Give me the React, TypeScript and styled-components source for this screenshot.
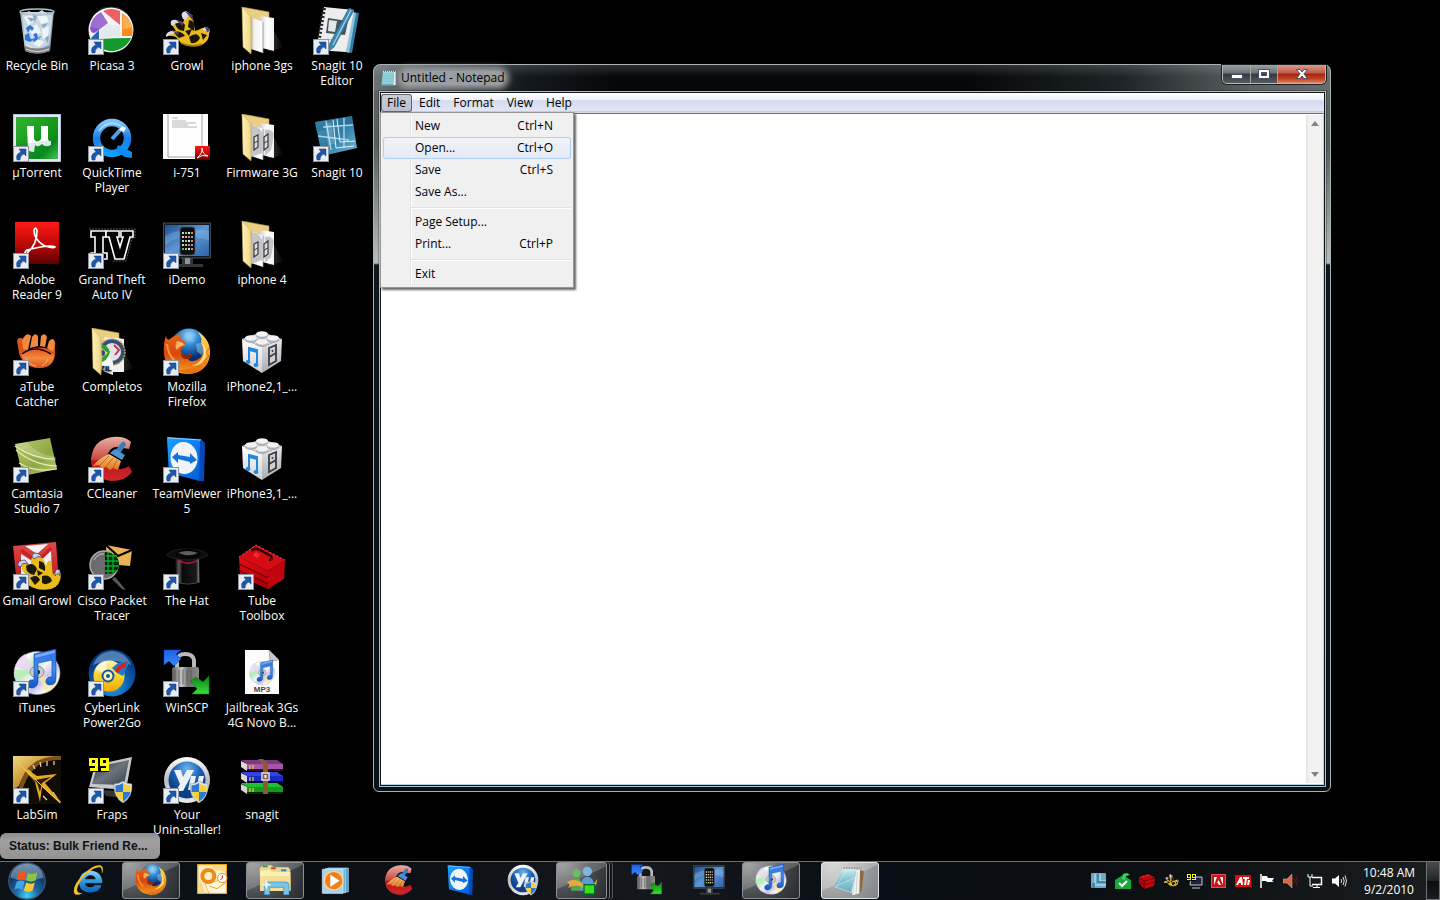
import React from "react";
import styled, { createGlobalStyle, css } from "styled-components";

const GlobalStyle = createGlobalStyle`
  *, *::before, *::after { box-sizing: border-box; }
  html, body { margin: 0; background: #000; }
  body, button, textarea { font-family: "Open Sans", "Noto Sans", sans-serif; font-size: 12px; }
  button { padding: 0; border: 0; background: none; color: inherit; cursor: default; }
`;

/* ---------- shared gradients ---------- */

const Defs = styled.svg`
  position: absolute;
  width: 0;
  height: 0;
`;

type Stop = [number, string];
const Lin = ({ id, s, h, d }: { id: string; s: Stop[]; h?: boolean; d?: boolean }) => (
  <linearGradient id={id} x1="0" y1="0" x2={h || d ? "1" : "0"} y2={h ? "0" : "1"}>
    {s.map(([o, c]) => <stop key={o} offset={o} stopColor={c} />)}
  </linearGradient>
);
const Rad = ({ id, s, cy = 0.4 }: { id: string; s: Stop[]; cy?: number }) => (
  <radialGradient id={id} cx="0.5" cy={cy} r="0.6">
    {s.map(([o, c]) => <stop key={o} offset={o} stopColor={c} />)}
  </radialGradient>
);

const SharedDefs = () => (
  <Defs aria-hidden="true">
    <defs>
      <Lin id="bin" h s={[[0, "#8fa3b5"], [0.25, "#dfe8f0"], [0.6, "#b9c9d8"], [1, "#74879a"]]} />
      <Lin id="fold" h s={[[0, "#fdf3b8"], [0.7, "#f3de93"], [1, "#d9bd68"]]} />
      <Lin id="paper" h s={[[0, "#cfcfcf"], [0.5, "#ffffff"], [1, "#f2f2f2"]]} />
      <Lin id="sheet" h s={[[0, "#b9b3a2"], [0.25, "#f1f1f1"], [1, "#ffffff"]]} />
      <Lin id="shadow" h s={[[0, "#555"], [1, "#000"]]} />
      <Lin id="green" d s={[[0, "#35b235"], [0.5, "#159b1c"], [0.75, "#0c8a14"], [1, "#4fd05a"]]} />
      <Lin id="qt" s={[[0, "#7cc4ff"], [0.5, "#1b7fe6"], [1, "#0aa0ff"]]} />
      <Lin id="snag" d s={[[0, "#4a97bd"], [0.5, "#2c7da6"], [1, "#7fb9d6"]]} />
      <Lin id="red" s={[[0, "#ff1a12"], [0.5, "#c00a08"], [1, "#5c0000"]]} />
      <Lin id="screen" d s={[[0, "#1f4f92"], [0.5, "#5e97d3"], [1, "#2a62aa"]]} />
      <Lin id="orange" s={[[0, "#e0501c"], [0.5, "#f58a3c"], [1, "#d8501c"]]} />
      <Lin id="fox" s={[[0, "#e8641a"], [0.5, "#d9480f"], [1, "#f6a21c"]]} />
      <Lin id="tail" s={[[0, "#ffe36a"], [0.5, "#f8a81e"], [1, "#e56a10"]]} />
      <Rad id="globe" cy={0.2} s={[[0, "#9fdcff"], [0.45, "#2e86d0"], [1, "#0b2c6e"]]} />
      <Lin id="cam" d s={[[0, "#b8cc6c"], [0.6, "#8fa843"], [1, "#b9cf77"]]} />
      <Lin id="cc" s={[[0, "#e9b0a4"], [0.5, "#cb4a40"], [0.55, "#b8181c"], [1, "#d2262a"]]} />
      <Lin id="brush" s={[[0, "#f8c27a"], [1, "#e0761c"]]} />
      <Lin id="tv" d s={[[0, "#1aa0ff"], [1, "#0060dc"]]} />
      <Lin id="cubeL" s={[[0, "#ffffff"], [1, "#cdd0d6"]]} />
      <Lin id="cubeR" s={[[0, "#e6e7ea"], [1, "#a9acb2"]]} />
      <Lin id="gmail" s={[[0, "#e04a48"], [1, "#b01418"]]} />
      <Lin id="box" s={[[0, "#e60c14"], [1, "#a40008"]]} />
      <Lin id="disc" d s={[[0, "#c7ccd3"], [0.2, "#ffffff"], [0.35, "#b7e8c4"], [0.5, "#f4f4f4"], [0.65, "#c9c2ec"], [0.8, "#ffffff"], [1, "#b6bec8"]]} />
      <Lin id="note" s={[[0, "#2f6be0"], [0.5, "#3f8ef2"], [1, "#0f55c8"]]} />
      <Rad id="p2g" cy={0.75} s={[[0, "#2fa8e8"], [0.55, "#0e63b4"], [1, "#083a80"]]} />
      <Lin id="yel" s={[[0, "#fff3b0"], [0.5, "#ffd42a"], [1, "#f5a800"]]} />
      <Lin id="lock" h s={[[0, "#5a5a5a"], [0.35, "#c2c2c2"], [0.6, "#6f6f6f"], [1, "#8c8c8c"]]} />
      <Lin id="arrG" s={[[0, "#0f7f14"], [1, "#35e03a"]]} />
      <Lin id="arrB" s={[[0, "#1a62e8"], [1, "#3b8bf8"]]} />
      <Lin id="gold" d s={[[0, "#f0d483"], [0.5, "#c8922c"], [1, "#8a5a14"]]} />
      <Lin id="mon" d s={[[0, "#2b2f36"], [0.5, "#6c747e"], [1, "#3b4047"]]} />
      <Rad id="yu" cy={0.2} s={[[0, "#6fb6ec"], [0.6, "#1c62b4"], [1, "#0e3f88"]]} />
      <Lin id="silver" s={[[0, "#ffffff"], [0.5, "#b9bcc2"], [1, "#e8eaee"]]} />
      <Rad id="orb" cy={0.9} s={[[0, "#3ed4f6"], [0.5, "#1b6aa8"], [1, "#123a66"]]} />
      <Lin id="shine" s={[[0, "#ffffff"], [1, "#8fb4d0"]]} />
      <Lin id="hatb" h s={[[0, "#000"], [0.15, "#5a5a5a"], [0.3, "#0a0a0a"], [0.85, "#1a1a1a"], [0.95, "#777"], [1, "#000"]]} />
      <Lin id="ie" s={[[0, "#8fd8ff"], [0.5, "#2f94dc"], [1, "#0b62b8"]]} />
      <Lin id="pad" s={[[0, "#cfeef4"], [0.5, "#7cc2d0"], [1, "#4f9fb4"]]} />
    </defs>
  </Defs>
);

/* ---------- icon drawings, 48 × 48 ---------- */

const RecycleBin = () => (
  <g>
    <path d="M7 5 L41 5 L37 44 Q24 49 12 44 Z" fill="url(#bin)" />
    <path d="M9 8 L16 4 22 7 29 3 34 7 40 5 38 24 36 38 25 41 13 38 Z" fill="#c9d8e6" />
    <path d="M11 10 L18 7 22 14 15 18 Z M24 9 L33 7 36 15 28 17 Z M16 22 L24 17 28 26 20 29 Z M29 22 L36 19 35 30 30 32 Z M25 32 L31 35 26 40 20 37 Z" fill="#eef4f9" />
    <path d="M14 10 L22 12 18 15 Z M28 18 L35 16 31 21 Z M22 30 L29 29 26 33 Z M32 31 L36 28 35 37 Z M20 6 L24 10 21 16 Z" fill="#8ea6be" />
    <ellipse cx="24" cy="5" rx="17" ry="3" fill="none" stroke="#b2bdc7" strokeWidth="1.4" />
    <path d="M13 21 L17 18 21 21 19 24 17 22 15 26 Z M12 28 L16 26 17 31 20 33 17 35 12 33 Z M20 27 L24 26 25 32 21 35 19 32 22 31 Z" fill="#2f74d8" />
    <path d="M12 39 Q24 44 37 39 L37 44 Q24 49 12 44 Z" fill="#7d7e7f" />
    <path d="M13 42 Q24 47 36 42" stroke="#dedede" fill="none" />
  </g>
);

const Picasa = () => (
  <g>
    <circle cx="23" cy="23" r="22.5" fill="#f4f4f4" />
    <path d="M2 21 A21 21 0 0 1 13 5 L20 16 8 25 Q3 28 2 21 Z" fill="#8b55c8" />
    <path d="M15 4 A21 21 0 0 1 32 4 L32 18 Z" fill="#e8434a" />
    <path d="M34 6 A21 21 0 0 1 44 29 L34 29 Z" fill="#f98a1c" />
    <path d="M35 8 A21 21 0 0 1 44 21 L35 23 Z" fill="#fbb040" opacity="0.6" />
    <path d="M43 31 A21 21 0 0 1 8 37 L11 32 Q26 31 43 31 Z" fill="#139a2c" />
    <path d="M3 31 L11 23 11 33 7 36 Z" fill="#2765b4" />
    <path d="M12 24 L20 17 32 19 32 30 12 31 Z" fill="#e3e8ec" />
    <path d="M2 20 A21 21 0 0 1 44 20 Q24 26 2 20 Z" fill="#fff" opacity="0.15" />
  </g>
);

const Paw = () => (
  <g>
    <path d="M13 30 Q8 28 3 29 Q5 23 13 24 Q10 20 8 15 Q12 11 17 17 Q20 18 21 13 Q19 7 23 6 Q29 7 31 17 L32 24 Q36 23 39 21 Q43 20 46 26 Q47 33 39 38 Q29 42 18 36 Z" fill="#e9bb1d" />
    <path d="M12 16 Q18 12 22 18 L21 24 Q13 23 12 16 Z M26 13 Q33 13 31 24 L25 20 Z M10 25 Q18 23 22 29 L16 31 Z M26 30 Q34 24 37 31 Q34 37 28 36 Z M22 24 L29 22 26 29 Z M38 26 L44 28 40 33 Z" fill="#1c1608" />
    <path d="M20 12 Q16 5 23 4 L30 9 Q24 8 23 13 Z M8 18 Q6 12 14 13 L20 16 Q12 15 10 19 Z M3 30 Q2 24 12 24 L16 26 Q8 26 5 29 Z M40 22 Q43 17 47 23 L46 27 Q44 22 40 24 Z" fill="#dcd9ea" />
    <path d="M22 4 L29 8 31 15 26 9 Z M13 13 L20 15 20 19 15 15 Z M9 24 L16 25 15 28 Z M42 20 Q45 19 47 24 L44 25 Z" fill="#49406e" />
    <path d="M18 36 Q28 41 39 37" stroke="#a87908" fill="none" strokeWidth="1.5" />
  </g>
);

const Folder = ({ kind }: { kind?: "cubes" | "brazil" }) => (
  <g>
    <path d="M30 44 L46 41 36 24 Z" fill="url(#shadow)" opacity="0.7" />
    <path d="M4 0 L31 5 31 30 12 36 Z" fill="#e9cf80" stroke="#b3934c" strokeWidth="0.6" />
    <path d="M22 9 L36 11 36 44 24 41 Z" fill="url(#paper)" />
    {kind === "brazil" && (
      <g>
        <path d="M16 9 L36 12 36 44 22 44 Z" fill="#f1f1f1" />
        <circle cx="24" cy="24" r="11" fill="#e3e3e6" stroke="#33507c" strokeWidth="4" />
        <circle cx="24" cy="24" r="13" fill="none" stroke="#bd9f4a" strokeWidth="1.500" strokeDasharray="2 1" />
        <path d="M26 17 L31 22 27 27" stroke="#c03a4c" fill="none" strokeWidth="2" />
      </g>
    )}
    {kind !== "brazil" && <path d="M13 10 L25 15 25 46 13 42 Z" fill="url(#sheet)" />}
    {kind !== "brazil" && <path d="M25 15 V46" stroke="#8e8e8e" strokeWidth="0.800" />}
    {kind === "cubes" && (
      <g>
        <path d="M14 12 Q20 10 25 20 L24 39 13 43 Z M27 16 Q33 14 36 20 L33 36 27 42 Z" fill="#c4c4ca" />
        <path d="M16 23 L20 21 20 33 16 36 Z M26 23 L30 20 30 33 26 36 Z" fill="#dedede" stroke="#3a3a3a" strokeWidth="1.200" />
        <path d="M16 29 L20 27 M26 29 L30 27" stroke="#3a3a3a" />
      </g>
    )}
    {kind === "brazil" && (
      <g>
        <path d="M12 17 L25 34 25 47 12 42 Z" fill="#f7f7f7" />
        <path d="M12 17 Q19 15 22 24 Q19 34 12 34 Z" fill="#2e9d3a" />
        <path d="M12 19 L20 25 12 31 Z" fill="#f3d93a" />
        <circle cx="14" cy="25" r="3" fill="#23429a" />
        <text x="12" y="43" fontFamily="Liberation Sans" fontWeight="700" fontSize="8" fill="#111">ZIL</text>
      </g>
    )}
    <path d="M4 0 L13 10 14 30 13 47 5 40 Z" fill="url(#fold)" stroke="#caa95a" strokeWidth="0.5" />
  </g>
);

const SnagitEditor = () => (
  <g>
    <path d="M34 4 L46 6 39 46 28 44 Z" fill="#2f7fa5" />
    <path d="M39 5 L43 6 36 46 33 45 Z" fill="#8cc3dc" />
    <path d="M11 0 L41 3 33 45 3 43 Z" fill="#ededed" />
    <path d="M11 1 L4 43" stroke="#222" strokeWidth="4" strokeDasharray="2 2" />
    <path d="M15 11 L35 14 32 28 13 26 Z" fill="#44575a" />
    <path d="M16 13 L24 14 22 25 15 24 Z" fill="#e2e8e8" />
    <path d="M27 16 L32 17 30 25 26 24 Z" fill="#5c8f9e" />
    <path d="M14 32 L20 33 M13 36 L17 37" stroke="#bbb" />
    <path d="M36 1 L41 3 21 40 15 45 17 36 Z" fill="#3f88b2" stroke="#1e5678" strokeWidth="0.6" />
    <path d="M38 3 L20 38" stroke="#a9d4ea" strokeWidth="1.2" />
  </g>
);

const UTorrent = () => (
  <g>
    <rect width="48" height="48" fill="#dfe9f2" stroke="#8fa6bd" />
    <rect x="3" y="3" width="42" height="42" fill="url(#green)" />
    <path d="M14 12 L21 12 21 25 Q24 30 28 25 L28 12 35 12 35 25 Q36 28 38 27 L38 31 Q32 34 29 30 Q25 34 22 31 L21 38 Q17 38 15 36 Z" fill="#fff" />
    <path d="M3 26 Q20 34 45 22 L45 45 3 45 Z" fill="#075" opacity="0.15" />
  </g>
);

const QuickTime = () => (
  <g>
    <circle cx="24" cy="24" r="15.5" fill="none" stroke="url(#qt)" strokeWidth="7.5" />
    <path d="M30 31 L44 38 44 44 37 43 28 37 Z" fill="#0f8af0" />
    <path d="M11 17 A15.500 15.500 0 0 1 33 12" stroke="#d6edff" fill="none" strokeWidth="1.5" opacity="0.7" />
    <path d="M24 25 L33 15" stroke="#4f9fe8" strokeWidth="4" />
    <path d="M31 16 L34 12 38 14 36 18 Z" fill="#fff" />
  </g>
);

const PdfDoc = () => (
  <g>
    <rect width="45" height="45" fill="#fff" />
    <path d="M5 0 V43 H39 V0" fill="#fefefe" stroke="#8c8c8c" strokeWidth="0.8" />
    <path d="M9 4 H15 M9 7 H23 M9 9 H33 M9 11 H25 M9 13 H34" stroke="#999" strokeWidth="0.7" />
    <rect x="32" y="32" width="15" height="14" fill="url(#red)" />
    <path d="M34 44 Q40 39 39 34 Q39 40 45 42 Q39 40 34 44 Z" stroke="#fff" fill="none" />
  </g>
);

const Snagit = () => (
  <g>
    <path d="M2 8 L39 2 44 34 9 42 Z" fill="url(#snag)" />
    <path d="M2 8 L39 2 40 10 3 18 Z" fill="#1c5a80" opacity="0.35" />
    <path d="M13 7 L18 36 M5 22 L36 26 M31 4 L31 34 M10 13 L40 11" stroke="#a9d3e6" fill="none" strokeWidth="1.4" />
    <path d="M20 6 L23 34 41 32 M24 5 L27 28 42 27" stroke="#e6f4fa" fill="none" />
    <path d="M12 10 L18 8 22 30 15 31 Z" fill="#fff" opacity="0.2" />
  </g>
);

const Adobe = () => (
  <g>
    <rect x="2" y="1" width="44" height="42" fill="url(#red)" />
    <path d="M14 32 Q24 24 24 10 Q23 5 21 9 Q21 18 30 24 Q40 28 42 26 Q38 23 14 29 Q10 32 14 33" stroke="#fff" fill="none" strokeWidth="1.7" />
  </g>
);

const GtaIV = () => (
  <g>
    <path d="M3 10 H18 V16 H15 V32 H19 V38 H3 V32 H7 V16 H3 Z" fill="#000" stroke="#fff" strokeWidth="1.6" />
    <path d="M18 10 H31 V16 H29 L32 26 35 16 H33 V10 H45 V16 H42 L36 38 H27 L21 16 H18 Z" fill="#000" stroke="#fff" strokeWidth="1.6" />
    <path d="M1 8 H47 V17 H44 L38 40 H25" stroke="#999" fill="none" strokeWidth="0.6" strokeDasharray="2 1" />
  </g>
);

const IDemo = () => (
  <g>
    <path d="M19 36 H30 V43 H40 V46 H10 V43 H19 Z" fill="#33373c" />
    <path d="M22 36 H27 V43 H22 Z" fill="#8e949b" />
    <rect x="0.500" y="2" width="47" height="35" fill="#141a24" stroke="#5c6672" strokeWidth="0.7" />
    <rect x="2" y="4" width="44" height="31" fill="url(#screen)" />
    <path d="M2 24 Q20 10 46 20 L46 10 Q20 5 2 15 Z" fill="#9cc6ef" opacity="0.3" />
    <rect x="17" y="6" width="15" height="28" rx="3" fill="#0c0d0f" stroke="#4e5560" strokeWidth="0.8" />
    {[0, 1, 2, 3, 4].map((r) => (
      <g key={r}>
        <rect x="19" y={11 + r * 4} width="2" height="2" fill={r === 4 ? "#4dc84f" : "#b9d7d0"} />
        <rect x="22" y={11 + r * 4} width="2" height="2" fill={r % 2 ? "#e4c24c" : "#8fd05c"} />
        <rect x="25" y={11 + r * 4} width="2" height="2" fill={r % 2 ? "#e07ab0" : "#e8e8e8"} />
        <rect x="28" y={11 + r * 4} width="2" height="2" fill={r % 2 ? "#6aa5e8" : "#e58a50"} />
      </g>
    ))}
  </g>
);

const ATube = () => (
  <g>
    <path d="M4 13 Q5 9 9 10 L15 23 Q24 17 36 21 L40 14 Q43 12 42 20 Q44 40 25 40 Q10 39 6 25 Z" fill="#d9531c" />
    <path d="M9 12 Q14 3 18 8 L15 22 10 21 Z M19 9 Q22 4 25 8 L25 18 17 20 Z M28 8 Q32 4 34 9 L32 19 27 18 Z M36 13 Q41 8 42 15 L40 24 34 20 Z" fill="#f08a3e" />
    <path d="M8 26 Q12 22 24 20 Q36 21 41 27 Q41 40 25 40 Q12 39 8 26 Z" fill="url(#orange)" />
    <path d="M9 26 Q22 16 38 26" stroke="#200" fill="none" strokeWidth="1.5" />
    <path d="M13 30 Q16 37 23 38 M35 31 Q33 36 29 38" stroke="#f9b27a" fill="none" />
  </g>
);

const Firefox = () => (
  <g>
    <circle cx="26" cy="19" r="18.500" fill="url(#globe)" />
    <path d="M22 5 Q30 3 33 7 L29 10 31 14 25 13 21 9 Z M33 16 L40 14 42 22 38 27 34 23 Z" fill="#8cc4e8" opacity="0.55" />
    <path d="M3 8 Q4 13 7 11 Q11 7 18 6 L17 10 Q22 13 23 17 Q17 19 18 24 Q21 29 28 26 Q30 28 25 31 Q28 36 37 30 Q44 24 41 12 Q48 22 46 31 Q41 46 24 46 Q4 45 1 27 Q0 15 3 8 Z" fill="url(#fox)" />
    <path d="M35 4 Q48 12 47 26 Q46 40 32 45 Q24 47 14 42 Q30 42 36 34 Q43 25 38 13 Q40 12 35 4 Z" fill="url(#tail)" />
    <path d="M38 14 Q43 22 40 29 Q36 36 28 38 Q39 38 43 29 Q45 20 38 14 Z" fill="#fff2a0" opacity="0.8" />
    <path d="M46 20 L43 25 46 28 41 33 43 36 M39 40 L36 38 32 43" stroke="#e0700f" fill="none" />
    <path d="M14 13 Q20 14 22 17 Q16 18 14 22 Q11 18 14 13 Z" fill="#f7b45a" />
    <path d="M18 25 Q22 29 29 26 Q29 30 24 31 Q18 31 18 25 Z" fill="#8a2508" />
    <path d="M4 16 Q5 27 12 33" stroke="#f99a3e" strokeWidth="2" fill="none" />
  </g>
);

const Cube = () => (
  <g>
    <path d="M4 11 L24 19 24 45 5 33 Z" fill="url(#cubeL)" />
    <path d="M24 19 L44 11 43 33 24 45 Z" fill="url(#cubeR)" />
    <path d="M4 11 L24 4 44 11 24 19 Z" fill="#d9dadd" />
    {[[24, 6], [13, 10], [35, 10], [24, 14]].map(([x, y]) => (
      <g key={`${x}-${y}`}>
        <path d={`M${x - 6} ${y} V${y + 2} A6 3 0 0 0 ${x + 6} ${y + 2} V${y} Z`} fill="#aeb0b6" />
        <ellipse cx={x} cy={y} rx="6" ry="2.800" fill="#f3f3f5" />
      </g>
    ))}
    <path d="M11 34 V20 L19 22 V37" stroke="#2387dc" strokeWidth="2" fill="none" />
    <path d="M11 20 L19 22 V25 L11 23 Z" fill="#2387dc" />
    <ellipse cx="10" cy="34" rx="2.500" ry="2" fill="#2387dc" />
    <ellipse cx="18" cy="37" rx="2.500" ry="2" fill="#2387dc" />
    <path d="M31 20 L38 17 38 33 31 37 Z" fill="#cfd0d4" stroke="#3b3b3f" strokeWidth="1.8" />
    <path d="M31 29 L38 25" stroke="#3b3b3f" strokeWidth="1.800" />
    <circle cx="34.500" cy="23" r="1" fill="#3b3b3f" />
  </g>
);

const Camtasia = () => (
  <g>
    <path d="M2 9 L37 3 44 34 10 41 Z" fill="url(#cam)" />
    <path d="M3 15 Q20 30 44 31 M2 11 Q20 24 42 24 M6 28 Q22 38 44 34" stroke="#e4ecba" fill="none" strokeWidth="1.200" />
    <path d="M2 9 Q20 26 43 26 L43 22 Q24 20 14 7 Z" fill="#fff" opacity="0.2" />
  </g>
);

const CCleaner = () => (
  <g>
    <path d="M43 7 Q37 1 25 2 Q5 4 3 24 Q3 44 24 46 Q37 46 44 37 L41 31 Q34 36 27 33 Q18 29 19 21 Q22 11 30 12 L41 14 Z" fill="url(#cc)" />
    <path d="M34 7 Q37 5 38 10 L31 20 26 17 Z" fill="#3a7cc0" />
    <path d="M22 18 L34 25 37 20 27 14 Z" fill="#4b93d6" />
    <path d="M21 19 L33 26 30 35 25 33 22 35 18 32 14 33 11 30 5 31 Q10 24 21 19 Z" fill="url(#brush)" />
    <path d="M21 21 L12 30 M25 23 L18 32 M29 25 L25 33" stroke="#b3591a" strokeWidth="0.800" />
  </g>
);

const TeamViewer = () => (
  <g>
    <path d="M4 2 L38 4 42 8 41 46 36 46 6 38 Z" fill="#0449b8" />
    <path d="M4 2 L37 5 36 45 6 38 Z" fill="url(#tv)" />
    <ellipse cx="21" cy="23" rx="13.500" ry="16" fill="#f0f3f8" transform="rotate(-6 21 23)" />
    <path d="M9 22 L15 17 15 20 27 22 27 18 34 25 27 29 27 27 15 24 15 28 Z" fill="#1173de" />
    <path d="M5 3 L38 5" stroke="#8fd0ff" />
  </g>
);

const GmailGrowl = () => (
  <g>
    <path d="M0 4 L43 0 46 40 4 44 Z" fill="url(#gmail)" />
    <path d="M12 4 L35 2 24 12 Z" fill="#f3f5fa" />
    <path d="M8 12 L24 22 38 9 39 36 8 38 Z" fill="#eef0f8" />
    <path d="M8 8 L24 20 38 6" stroke="#c92024" strokeWidth="3" fill="none" />
    <path d="M12 32 Q8 28 9 21 Q14 18 18 25 Q17 12 24 12 Q31 14 33 24 Q35 16 38 20 L40 33 Q45 26 48 32 Q48 44 38 47 Q24 50 14 42 Q8 40 7 35 Z" fill="#e9bb1d" />
    <path d="M13 24 Q20 19 24 27 L21 33 Q13 32 13 24 Z M26 19 Q33 19 32 29 L26 26 Z M29 34 Q37 32 39 39 Q34 44 29 41 Z M17 36 Q24 31 27 38 L22 43 Z M24 28 L30 31 25 34 Z" fill="#1c1608" />
    <path d="M5 24 Q4 18 12 18 L15 22 Q8 20 8 25 Z M19 15 Q19 9 26 12 L30 16 Q24 13 22 17 Z M42 31 Q42 26 47 28 L47 34 Q46 29 42 34 Z" fill="#cfcbe6" stroke="#49406e" strokeWidth="0.800" />
  </g>
);

const PacketTracer = () => (
  <g>
    <path d="M18 3 L44 8 42 24 19 22 Z" fill="#e9b457" />
    <path d="M18 3 L30 14 44 8" stroke="#000" fill="none" strokeWidth="2" />
    <circle cx="16" cy="23" r="14" fill="#6c6c6c" stroke="#a8a8a8" strokeWidth="1.500" />
    <path d="M17 10 Q31 11 31 23 Q30 33 17 32 Z" fill="#021" />
    <path d="M18 14 H29 M17 19 H31 M17 24 H31 M17 29 H29 M20 10 V32 M25 12 V31" stroke="#00b81e" strokeWidth="1.300" />
    <path d="M27 35 L38 48 34 47 24 37 Z" fill="#55585c" />
    <path d="M6 18 Q10 11 16 12" stroke="#c9c9c9" fill="none" />
  </g>
);

const Hat = () => (
  <g>
    <path d="M12 17 H36 L37 40 Q25 45 13 40 Z" fill="url(#hatb)" />
    <path d="M15 17 Q25 24 35 17 L35 19 Q25 25 15 19 Z" fill="#b31a3c" />
    <path d="M3 13 Q8 7 24 7 Q41 7 45 13 Q38 18 24 18 Q9 18 3 13 Z" fill="#0e0e0e" stroke="#2c2c2c" strokeWidth="0.600" />
    <ellipse cx="25" cy="12" rx="13" ry="5" fill="#060606" />
    <path d="M15 11 Q24 7 35 11 Q29 14 22 13 Z" fill="#5d5f62" />
    <path d="M13 40 Q25 44 37 40" stroke="#444" fill="none" />
  </g>
);

const Toolbox = () => (
  <g>
    <path d="M1 15 L18 3 47 18 30 29 Z" fill="#d50c14" />
    <path d="M1 15 L30 29 30 47 2 35 Z" fill="url(#box)" />
    <path d="M30 29 L47 18 46 37 30 47 Z" fill="#c00410" />
    <path d="M1 22 L30 36 M2 29 L30 42" stroke="#6e0006" strokeWidth="1.200" />
    <path d="M14 9 Q16 5 22 8 L33 14 Q35 18 31 18" stroke="#2a0606" strokeWidth="2.500" fill="none" />
    <path d="M1 15 L18 3 47 18" stroke="#ff4a50" fill="none" strokeDasharray="2 2" />
    <path d="M15 13 L18 10 22 13 19 16 Z" fill="#ff2a30" />
  </g>
);

const ITunes = () => (
  <g>
    <ellipse cx="24" cy="24" rx="23" ry="21.500" fill="url(#disc)" stroke="#9aa3ae" strokeWidth="0.600" />
    <path d="M24 24 L2 18 Q5 8 12 5 Z" fill="#e9d6f0" opacity="0.8" />
    <path d="M24 24 L1 28 2 20 Z" fill="#b5efb0" opacity="0.8" />
    <path d="M24 24 L45 33 Q41 41 33 44 Z" fill="#f8e8a0" opacity="0.7" />
    <ellipse cx="24" cy="23" rx="7" ry="6" fill="#c9ccd2" stroke="#8b9097" />
    <ellipse cx="24" cy="23" rx="3" ry="2.500" fill="#222" />
    <path d="M21 5 L43 0 43 30 Q43 36 36 36 Q32 35 33 31 Q35 27 39 28 L39 11 25 14 25 33 Q24 39 18 39 Q13 38 15 33 Q17 30 21 31 Z" fill="url(#note)" stroke="#0d3f9c" strokeWidth="0.600" />
    <path d="M22 6 L42 1 42 4 22 9 Z" fill="#8fc0ff" opacity="0.700" />
  </g>
);

const Power2Go = () => (
  <g>
    <circle cx="24" cy="24" r="23.500" fill="url(#p2g)" />
    <path d="M5 16 Q10 3 24 2 Q38 3 43 16 Q24 8 5 16 Z" fill="#b8e4fa" opacity="0.4" />
    <circle cx="21" cy="27" r="15.500" fill="url(#yel)" />
    <path d="M21 27 L7 20 Q11 13 17 12 Z" fill="#fff" opacity="0.6" />
    <path d="M24 19 L30 14 42 12 35 27 29 24 Z" fill="#1f7cc4" />
    <circle cx="20" cy="27" r="5.500" fill="#fff0a8" stroke="#0f5aa8" strokeWidth="2" />
    <circle cx="20" cy="27" r="2" fill="#0f5aa8" />
    <path d="M27 22 Q29 15 40 13 Q36 16 39 19 Q33 18 30 24 Z" fill="#e0201c" />
  </g>
);

const WinSCP = () => (
  <g>
    <path d="M14 19 V11 Q15 5 22 5 Q30 5 31 11 V19" fill="none" stroke="#b8babd" strokeWidth="4" />
    <rect x="9" y="18" width="27" height="20" rx="2" fill="url(#lock)" />
    <path d="M12 21 V35 M16 21 V35 M20 21 V35 M24 21 V35 M28 21 V35" stroke="#555" strokeWidth="0.800" />
    <path d="M1 1 H18 L13 5 18 10 11 17 6 12 1 16 Z" fill="url(#arrB)" stroke="#0c48b8" strokeWidth="0.600" />
    <path d="M28 32 L33 28 40 33 46 27 V45 H29 L34 40 Z" fill="url(#arrG)" stroke="#0a7a12" strokeWidth="0.600" />
  </g>
);

const Mp3 = () => (
  <g>
    <path d="M7 1 H31 L41 11 V45 H7 Z" fill="#fdfdfd" />
    <path d="M31 1 L41 11 32 12 Z" fill="#c9c9c9" stroke="#777" strokeWidth="0.500" />
    <g transform="translate(11 11) scale(0.550)"><ITunes /></g>
    <text x="24" y="43" textAnchor="middle" fontFamily="Liberation Sans" fontWeight="700" fontSize="8" fill="#444" style={{ textShadow: "none" }}>MP3</text>
  </g>
);

const LabSim = () => (
  <g>
    <rect width="48" height="48" fill="#120c06" />
    <path d="M0 0 H48 V4 Q16 0 6 30 L0 34 Z" fill="url(#gold)" />
    <path d="M48 4 Q20 2 10 32 L6 32 Q12 0 48 0 Z" fill="#7c521a" />
    <path d="M20 9 L22 13 M27 6 L28 11 M34 5 L34 10 M41 5 L41 9 M15 14 L19 17 M30 40 L34 44 M40 36 L44 42" stroke="#eadcc0" strokeWidth="1.200" />
    <path d="M5 7 L24 20 44 18 32 27 48 46 47 47 29 31 27 46 22 26 Z" fill="#e5a928" />
    <path d="M16 19 L22 24 38 21 29 27 27 36 24 27 Z" fill="#2c1c08" />
    <path d="M5 7 L47 47" stroke="#f5cf5e" />
  </g>
);

const Shield = ({ x, y }: { x: number; y: number }) => (
  <g transform={`translate(${x} ${y})`}>
    <path d="M9 0 Q13 3 18 3 Q19 16 9 22 Q-1 16 0 3 Q5 3 9 0 Z" fill="#dfe5ee" stroke="#77808c" strokeWidth="0.500" />
    <path d="M9 2 V11 H1.500 V4.500 Q6 4 9 2 Z M9 11 H16.500 Q15 17 9 20.500 Z" fill="#2f78d0" />
    <path d="M9 2 Q12 4.500 16.500 4.500 V11 H9 Z M1.500 11 H9 V20.500 Q3 17 1.500 11 Z" fill="#f6cf3c" />
  </g>
);

const Fraps = () => (
  <g>
    <path d="M7 9 L44 1 38 34 1 31 Z" fill="#c7cacd" />
    <path d="M9 11 L41 4 36 29 4 28 Z" fill="url(#mon)" />
    <path d="M14 34 L30 35 28 41 18 40 Z" fill="#34373a" />
    <rect x="0" y="1" width="21" height="15" fill="#000" />
    <path d="M1 2 H10 V15 H2 V12 H7 V10 H1 Z M4 4 V7 H7 V4 Z M12 2 H21 V15 H13 V12 H18 V10 H12 Z M15 4 V7 H18 V4 Z" fill="#ff0" fillRule="evenodd" />
    <Shield x={26} y={25} />
  </g>
);

const YourUninstaller = () => (
  <g>
    <circle cx="24" cy="24" r="23" fill="url(#silver)" />
    <circle cx="24" cy="24" r="18.500" fill="url(#yu)" />
    <path d="M11 14 H18 L20 21 24 14 H31 L20 35 H13 L17 28 Z M28 20 H33 L31 29 H34 L36 20 H41 L38 34 H25 Z" fill="#eef2f6" />
    <Shield x={27} y={25} />
  </g>
);

const WinRar = () => (
  <g>
    {[
      { y: 4, a: "#a856a4", b: "#7c3a7e" },
      { y: 16, a: "#1c28c8", b: "#3444dc" },
      { y: 27, a: "#149a20", b: "#22c030" },
    ].map(({ y, a, b }) => (
      <g key={y}>
        <path d={`M3 ${y} L39 ${y} 45 ${y + 4} 9 ${y + 4} Z`} fill={b} />
        <path d={`M9 ${y + 4} H45 V${y + 11} H9 Z`} fill={a} />
        <path d={`M9 ${y + 10} H45`} stroke="#000" strokeWidth="1.500" />
        <path d={`M3 ${y + 1} L9 ${y + 4} V${y + 11} L3 ${y + 7} Z`} fill="#d8d8d8" />
        <path d={`M12 ${y + 5} V${y + 9} M15 ${y + 5} V${y + 9}`} stroke="#e8d34a" strokeWidth="1.200" />
      </g>
    ))}
    <path d="M20 3 H25 L30 8 V38 H25 V8 Z" fill="#8a5a34" />
    <rect x="24" y="17" width="7" height="7" fill="none" stroke="#d8d8d0" strokeWidth="1.600" />
    <rect x="26.500" y="19" width="2" height="3" fill="#fff" />
  </g>
);

const ShortcutArrow = () => (
  <g>
    <rect x="0.500" y="32.500" width="15" height="15" fill="#e8edf3" stroke="#8d959e" />
    <path d="M4 46 Q2 40 8 38 L6 35 H13 V42 L11 40 Q7 41 7 46 Z" fill="#1f57a8" stroke="#123c80" strokeWidth="0.500" />
  </g>
);

/* taskbar-only drawings, same 48 grid */

const StartOrb = () => (
  <g>
    <circle cx="24" cy="24" r="23" fill="url(#orb)" stroke="#3b5a78" strokeWidth="1.500" />
    <path d="M3 20 Q6 3 24 2 Q42 3 45 20 Q24 27 3 20 Z" fill="url(#shine)" opacity="0.45" />
    <path d="M13 14 Q18 10 23 13 L21 23 Q16 20 11 23 Z" fill="#f2561d" />
    <path d="M25 14 Q31 17 37 13 L35 23 Q29 26 23 23 Z" fill="#8cc63c" />
    <path d="M11 25 Q16 22 21 25 L18 35 Q13 32 8 35 Z" fill="#42a5ee" />
    <path d="M23 26 Q29 29 34 26 L31 36 Q26 39 20 36 Z" fill="#fcc82c" />
  </g>
);

const InternetExplorer = () => (
  <g>
    <path d="M44 29 H18 Q19 35 26 35 Q31 35 33 32 H43 Q39 43 26 43 Q9 42 9 27 Q10 11 26 10 Q44 11 44 29 Z M18 23 H34 Q33 17 26 17 Q20 17 18 23 Z" fill="url(#ie)" fillRule="evenodd" />
    <path d="M44 13 Q47 4 41 2 Q32 0 17 14 Q-2 33 2 44 Q4 49 15 43 Q6 45 6 38 Q8 27 21 14 Q34 3 41 5 Q44 7 43 13 Z" fill="#f6bf26" />
  </g>
);

const Outlook = () => (
  <g>
    <path d="M1 1 H44 V44 H1 Z" fill="#fdf0c8" stroke="#e8a21c" strokeWidth="2" />
    <path d="M12 30 L44 22 V44 H18 Z" fill="#fff6dc" stroke="#e8a21c" />
    <path d="M4 22 L12 44 H2 Z M22 3 H42 V12 L26 8 Z" fill="#f8d98a" />
    <circle cx="17" cy="18" r="9" fill="none" stroke="#ee8a1a" strokeWidth="6" />
    <path d="M18 33 L30 37 43 28" stroke="#e8a21c" fill="none" strokeWidth="1.500" />
    <circle cx="38" cy="21" r="7" fill="#fff" stroke="#e09018" strokeWidth="1.500" />
    <path d="M38 17 V21 L35 24" stroke="#c22" fill="none" strokeWidth="1.500" />
  </g>
);

const Explorer = () => (
  <g>
    <path d="M1 6 L8 2 H18 L22 5 H44 L47 9 V40 H2 Z" fill="#f0d88c" />
    <path d="M6 2 H13 V5 H6 Z" fill="#2da14a" />
    <path d="M18 5 H25 V8 H18 Z" fill="#d8452c" />
    <path d="M33 8 H41 V11 H33 Z" fill="#2a86d8" />
    <path d="M2 10 L16 9 20 12 H47 V40 H2 Z" fill="#fbeeb8" />
    <path d="M2 18 H47 V40 H2 Z" fill="#f4dd94" />
    <path d="M8 32 Q8 27 13 27 H40 Q45 27 45 32 V46 H37 V35 H16 V46 H8 Z" fill="#7cc3e8" stroke="#3f8dba" />
    <path d="M11 22 L13 29 19 31 13 33 11 39 9 33 4 31 9 29 Z" fill="#fff" opacity="0.8" />
  </g>
);

const MediaPlayer = () => (
  <g>
    <path d="M10 6 H41 V42 H10 Z" fill="#4c9cc8" stroke="#c7e4f2" />
    <path d="M6 7 H37 V43 H6 Z" fill="#6db4da" stroke="#c7e4f2" />
    <path d="M2 8 H33 V44 H2 Z" fill="#a5d3ea" stroke="#dff0f8" />
    <circle cx="19" cy="25" r="14" fill="#f07f1c" stroke="#fbd2a0" strokeWidth="2" />
    <path d="M14 16 L28 25 14 34 Z" fill="#fff" />
  </g>
);

const Messenger = () => (
  <g>
    <circle cx="16" cy="14" r="6" fill="#6dbb62" />
    <path d="M8 40 Q7 21 16 21 Q25 21 25 40 Z" fill="#5aa64e" />
    <circle cx="32" cy="11" r="7" fill="#7fb6e0" />
    <path d="M22 40 Q21 19 32 19 Q43 19 43 40 Z" fill="#5c9bce" />
    <path d="M1 27 Q14 20 26 30 Q37 40 47 22 Q45 44 28 37 Q16 28 3 36 Q8 30 1 27 Z" fill="#e8a83e" />
    <rect x="27" y="31" width="16" height="14" fill="#3be01c" stroke="#063" strokeWidth="2" />
  </g>
);

const NotepadIcon = () => (
  <g>
    <path d="M38 9 L45 11 41 42 33 44 Z" fill="#8c6a3c" />
    <path d="M14 7 L39 9 38 44 28 47 Z" fill="#eef2f2" />
    <path d="M13 7 L34 9 26 43 1 34 Z" fill="url(#pad)" />
    <path d="M20 8 L4 33 M1 34 L26 43 32 20 Z" stroke="#d6f2f6" fill="#fff" fillOpacity="0.15" strokeWidth="0.800" />
    <path d="M14 6 H40" stroke="#9a9a9a" strokeWidth="3" strokeDasharray="2 2" />
    <path d="M32 12 L28 45 M35 12 L33 45" stroke="#b8c4c4" />
  </g>
);

const NotepadSmall = () => (
  <g>
    <path d="M7 6 H44 V44 L40 47 H0 Z" fill="#5aa3b4" />
    <path d="M6 6 H38 L36 43 H2 Z" fill="#8fcfdb" />
    <path d="M39 6 H44 V45 H37 Z" fill="#f3f6f6" />
    <path d="M6 5 H44" stroke="#ddd" strokeWidth="6" strokeDasharray="3 3" />
    <path d="M9 18 H36 M8 26 H36 M7 34 H35" stroke="#7fc0cc" strokeWidth="2" />
  </g>
);

/* ---------- desktop ---------- */

const Screen = styled.main`
  position: relative;
  display: flex;
  flex-direction: column;
  min-height: 100vh;
  background: #000;
  overflow: hidden;
`;

const IconGrid = styled.div`
  flex: 1;
  display: grid;
  grid-auto-flow: column;
  grid-template-rows: repeat(8, 107px);
  grid-auto-columns: 75px;
`;

const DesktopItem = styled.button`
  display: flex;
  flex-direction: column;
  align-items: center;
  padding: 7px 1px 0 0;
  color: #fff;
  font-size: 12px;
  line-height: 15px;
  white-space: pre;
  text-align: center;
  text-shadow: 0 1px 2px #000;
`;

const Glyph = styled.svg<{ $size: number }>`
  display: block;
  flex: none;
  width: ${(p) => p.$size}px;
  height: ${(p) => p.$size}px;
`;

const Label = styled.span`
  margin-top: 3px;
`;

type Art = () => React.ReactElement;
type Entry = { art: Art; label: string; link?: boolean };

const entries: Entry[] = [
  { art: RecycleBin, label: "Recycle Bin" },
  { art: UTorrent, label: "µTorrent", link: true },
  { art: Adobe, label: "Adobe\nReader 9", link: true },
  { art: ATube, label: "aTube\nCatcher", link: true },
  { art: Camtasia, label: "Camtasia\nStudio 7", link: true },
  { art: GmailGrowl, label: "Gmail Growl", link: true },
  { art: ITunes, label: "iTunes", link: true },
  { art: LabSim, label: "LabSim", link: true },
  { art: Picasa, label: "Picasa 3", link: true },
  { art: QuickTime, label: "QuickTime\nPlayer", link: true },
  { art: GtaIV, label: "Grand Theft\nAuto IV", link: true },
  { art: () => <Folder kind="brazil" />, label: "Completos" },
  { art: CCleaner, label: "CCleaner", link: true },
  { art: PacketTracer, label: "Cisco Packet\nTracer", link: true },
  { art: Power2Go, label: "CyberLink\nPower2Go", link: true },
  { art: Fraps, label: "Fraps", link: true },
  { art: Paw, label: "Growl", link: true },
  { art: PdfDoc, label: "i-751" },
  { art: IDemo, label: "iDemo", link: true },
  { art: Firefox, label: "Mozilla\nFirefox", link: true },
  { art: TeamViewer, label: "TeamViewer\n5", link: true },
  { art: Hat, label: "The Hat", link: true },
  { art: WinSCP, label: "WinSCP", link: true },
  { art: YourUninstaller, label: "Your\nUnin-staller!", link: true },
  { art: () => <Folder />, label: "iphone 3gs" },
  { art: () => <Folder kind="cubes" />, label: "Firmware 3G" },
  { art: () => <Folder kind="cubes" />, label: "iphone 4" },
  { art: Cube, label: "iPhone2,1_..." },
  { art: Cube, label: "iPhone3,1_..." },
  { art: Toolbox, label: "Tube\nToolbox", link: true },
  { art: Mp3, label: "Jailbreak 3Gs\n4G Novo B..." },
  { art: WinRar, label: "snagit" },
  { art: SnagitEditor, label: "Snagit 10\nEditor", link: true },
  { art: Snagit, label: "Snagit 10", link: true },
];

const Picture = ({ art: Draw, size = 48, link }: { art: Art; size?: number; link?: boolean }) => (
  <Glyph $size={size} viewBox="0 0 48 48" aria-hidden="true">
    <Draw />
    {link && <ShortcutArrow />}
  </Glyph>
);

/* ---------- notepad window ---------- */

const Window = styled.section`
  position: absolute;
  left: 373px;
  right: 109px;
  top: 64px;
  bottom: 108px;
  display: flex;
  flex-direction: column;
  padding: 0 4px 4px 5px;
  border: 1px solid #a9b1b5;
  border-radius: 7px 7px 6px 6px;
  background:
    linear-gradient(#ffffff26, #ffffff00 12px) top / 100% 26px no-repeat,
    linear-gradient(90deg, #6d7375 0, #4a5053 50px, #14191d 150px, #05080b 240px, #05080b 62%, #1d2326 78%, #5a6264 92%, #666d6f 100%) top / 100% 26px no-repeat,
    linear-gradient(#5f6668 0, #595f61 80px, #b9bdbe 198px, #10181d 200px, #0b1217 100%);
`;

const TitleBar = styled.header`
  display: flex;
  align-items: center;
  height: 26px;
  padding-left: 2px;
`;

const Title = styled.h1`
  margin: 0 0 0 4px;
  font-size: 12px;
  font-weight: 400;
  line-height: 14px;
  color: #000;
  background: #9a9ea0;
  border-radius: 7px;
  box-shadow: 0 0 6px 4px #9a9ea0;
`;

const CaptionButtons = styled.div`
  display: flex;
  align-self: flex-start;
  height: 19px;
  margin-left: auto;
  border: 1px solid #b5babc;
  border-top: 0;
  border-radius: 0 0 5px 5px;
  overflow: hidden;
  box-shadow: 0 0 0 1px #1b2023;
`;

const CaptionButton = styled.button<{ $close?: boolean }>`
  display: flex;
  align-items: center;
  justify-content: center;
  width: ${(p) => (p.$close ? 48 : 27)}px;
  background: ${(p) =>
    p.$close
      ? "linear-gradient(#d69a8c 0, #bf5b47 45%, #a3240f 50%, #c4482b 80%, #e0866a 100%)"
      : "linear-gradient(#9ba1a4 0, #6c7376 45%, #33393c 50%, #555c5f 100%)"};
  & + & { border-left: 1px solid #a3a8aa; }
`;

const Client = styled.div`
  flex: 1;
  display: flex;
  flex-direction: column;
  border: 1px solid #b7bec2;
  outline: 1px solid #00000040;
  box-shadow: inset 0 0 0 1px #10171c;
  padding: 1px;
`;

const MenuBar = styled.nav`
  position: relative;
  display: flex;
  align-items: stretch;
  gap: 1px;
  height: 20px;
  padding-top: 1px;
  padding-bottom: 1px;
  background: linear-gradient(#ffffff 0, #f0f2fa 35%, #d5dbee 38%, #e2e6f5 90%, #aab2c8 95%, #ffffff 100%);
`;

const MenuBarButton = styled.button<{ $open?: boolean }>`
  padding: 0 6px;
  line-height: 18px;
  color: #000;
  border-radius: 3px;
  ${(p) =>
    p.$open &&
    css`
      background: linear-gradient(#c9cdd8, #b9bfce);
      box-shadow: inset 0 0 0 1px #5f636c;
    `}
`;

const MenuPanel = styled.div`
  position: absolute;
  z-index: 2;
  left: -1px;
  top: 19px;
  width: 194px;
  padding: 2px;
  border: 1px solid #979797;
  background: linear-gradient(90deg, #e2e3e3 1px, #fff 1px) 29px 2px / 2px calc(100% - 4px) no-repeat, #f0f0f0;
  box-shadow: 2px 2px 2px #00000099;
`;

const MenuItem = styled.button<{ $hot?: boolean }>`
  display: flex;
  justify-content: space-between;
  align-items: center;
  width: 100%;
  height: 22px;
  padding: 0 18px 2px 32px;
  color: #000;
  border-radius: 3px;
  ${(p) =>
    p.$hot &&
    css`
      box-shadow: inset 0 0 0 1px #aecff7;
      background: linear-gradient(#f2f4f7cc, #dfe8f5cc);
    `}
`;

const MenuRule = styled.hr`
  height: 2px;
  margin: 4px 0 2px 28px;
  border: 0;
  border-top: 1px solid #e0e0e0;
  background: #fff;
`;

const Editor = styled.div`
  flex: 1;
  display: flex;
  border-top: 1px solid #3f7fb0;
  border-right: 1px solid #a9d3e8;
  border-bottom: 1px solid #a9d3e8;
  background: #fff;
`;

const TextArea = styled.textarea`
  flex: 1;
  min-width: 0;
  border: 0;
  padding: 2px;
  resize: none;
  outline: none;
  background: #fff;
  overflow: hidden;
`;

const ScrollTrack = styled.div`
  display: flex;
  flex-direction: column;
  justify-content: space-between;
  width: 17px;
  margin: 1px 0;
  background: linear-gradient(90deg, #e4e4e4, #f3f3f3 20%, #f0f0f0);
`;

const ScrollArrow = styled.button`
  display: flex;
  align-items: center;
  justify-content: center;
  height: 17px;
`;

const menuItems: ({ name: string; keys?: string; hot?: boolean } | null)[] = [
  { name: "New", keys: "Ctrl+N" },
  { name: "Open...", keys: "Ctrl+O", hot: true },
  { name: "Save", keys: "Ctrl+S" },
  { name: "Save As..." },
  null,
  { name: "Page Setup..." },
  { name: "Print...", keys: "Ctrl+P" },
  null,
  { name: "Exit" },
];

const Notepad = () => (
  <Window aria-label="Untitled - Notepad">
    <TitleBar>
      <Picture art={NotepadSmall} size={16} />
      <Title>Untitled - Notepad</Title>
      <CaptionButtons>
        <CaptionButton aria-label="Minimize">
          <svg width="14" height="12"><rect x="1.500" y="6.500" width="11" height="4" fill="#fff" stroke="#4a4f66" /></svg>
        </CaptionButton>
        <CaptionButton aria-label="Maximize">
          <svg width="14" height="12"><path d="M1.500 1.500 H12.500 V10.500 H1.500 Z M4.500 4.500 V7.500 H9.500 V4.500 Z" fill="#fff" fillRule="evenodd" stroke="#4a4f66" /></svg>
        </CaptionButton>
        <CaptionButton $close aria-label="Close">
          <svg width="14" height="12"><path d="M1.500 1.500 H5 L7 4 9 1.500 H12.500 L9 6 12.500 10.500 H9 L7 8 5 10.500 H1.500 L5 6 Z" fill="#fff" stroke="#4a4f66" /></svg>
        </CaptionButton>
      </CaptionButtons>
    </TitleBar>
    <Client>
      <MenuBar>
        <MenuBarButton $open aria-expanded="true">File</MenuBarButton>
        <MenuBarButton>Edit</MenuBarButton>
        <MenuBarButton>Format</MenuBarButton>
        <MenuBarButton>View</MenuBarButton>
        <MenuBarButton>Help</MenuBarButton>
        <MenuPanel role="menu" aria-label="File">
          {menuItems.map((item, i) =>
            item ? (
              <MenuItem key={item.name} role="menuitem" $hot={item.hot}>
                <span>{item.name}</span>
                {item.keys && <span>{item.keys}</span>}
              </MenuItem>
            ) : (
              <MenuRule key={i} />
            )
          )}
        </MenuPanel>
      </MenuBar>
      <Editor>
        <TextArea aria-label="Text editor" />
        <ScrollTrack>
          <ScrollArrow aria-label="Scroll up">
            <svg width="8" height="5"><path d="M0 5 L4 0 8 5 Z" fill="#848484" /></svg>
          </ScrollArrow>
          <ScrollArrow aria-label="Scroll down">
            <svg width="8" height="5"><path d="M0 0 H8 L4 5 Z" fill="#848484" /></svg>
          </ScrollArrow>
        </ScrollTrack>
      </Editor>
    </Client>
  </Window>
);

/* ---------- taskbar ---------- */

const StatusTip = styled.div`
  position: absolute;
  left: 0;
  bottom: 41px;
  width: 160px;
  height: 26px;
  padding-left: 9px;
  border-radius: 6px;
  background: linear-gradient(#8c8c8c, #a0a0a0 30%, #929292);
  color: #111;
  font: 700 12px/26px "Liberation Sans", sans-serif;
  white-space: nowrap;
`;

const Taskbar = styled.footer`
  display: flex;
  align-items: stretch;
  height: 39px;
  border-top: 1px solid #6d7074;
  background: linear-gradient(90deg, #0d1218, #0a0e15 20%, #14171c 45%, #0a0e16 60%, #0c1013 80%, #1a1d20);
`;

const StartButton = styled.button`
  display: flex;
  justify-content: center;
  align-items: center;
  width: 54px;
  margin-right: 6px;
`;

const TaskList = styled.div`
  display: flex;
  gap: 4px;
`;

type TaskState = "idle" | "open" | "active";
const TaskButton = styled.button<{ $state: TaskState; $stack?: boolean }>`
  display: flex;
  justify-content: center;
  align-items: center;
  width: ${(p) => (p.$stack ? 51 : 58)}px;
  margin-right: ${(p) => (p.$stack ? 7 : 0)}px;
  margin-bottom: 1px;
  padding-bottom: 1px;
  border-radius: 3px;
  ${(p) =>
    p.$state === "open" &&
    css`
      border: 1px solid #8c8f92;
      background:
        linear-gradient(155deg, #ffffff30 45%, #ffffff00 46%),
        radial-gradient(circle at 10% 0, #8e9092, #4a4d50 50%, #26292d);
    `}
  ${(p) =>
    p.$state === "active" &&
    css`
      margin-left: 17px;
      border: 1px solid #e3e4e5;
      background:
        linear-gradient(155deg, #ffffff40 45%, #ffffff00 46%),
        radial-gradient(circle at 20% 0, #cdcdcd, #9a9b9c 60%, #808182);
    `}
  ${(p) =>
    p.$stack &&
    css`
      box-shadow: 2px 0 0 #14171c, 3px 0 0 #6d7073, 5px 0 0 #14171c, 6px 0 0 #55585b;
    `}
`;

const tasks: { name: string; art: Art; state?: TaskState; stack?: boolean }[] = [
  { name: "Internet Explorer", art: InternetExplorer },
  { name: "Mozilla Firefox", art: Firefox, state: "open" },
  { name: "Outlook", art: Outlook },
  { name: "Windows Explorer", art: Explorer, state: "open" },
  { name: "Windows Media Player", art: MediaPlayer },
  { name: "CCleaner", art: CCleaner },
  { name: "TeamViewer", art: TeamViewer },
  { name: "Your Uninstaller", art: YourUninstaller },
  { name: "Messenger", art: Messenger, state: "open", stack: true },
  { name: "WinSCP", art: WinSCP },
  { name: "iDemo", art: IDemo },
  { name: "iTunes", art: ITunes, state: "open" },
  { name: "Notepad", art: NotepadIcon, state: "active" },
];

const Tray = styled.div`
  display: flex;
  align-items: center;
  gap: 8px;
  margin-left: auto;
`;

const TrayButton = styled.button`
  display: block;
`;

const Clock = styled.time`
  width: 70px;
  margin-left: 7px;
  color: #fff;
  font-size: 12px;
  line-height: 17px;
  padding-top: 2px;
  text-align: center;
  white-space: nowrap;
`;

const ShowDesktop = styled.button`
  width: 14px;
  margin-left: 2px;
  border: 1px solid #6f7276;
  border-top: 0;
  background: linear-gradient(#4a4d50, #222528 50%, #0b0d10 52%, #1a1c1f);
`;

const trayArt: { name: string; art: Art }[] = [
  {
    name: "Snagit",
    art: () => (
      <g>
        <rect width="15" height="15" rx="1" fill="#6ba9c9" />
        <path d="M4 1 V12 H15 M9 1 V8 H15" stroke="#cfe8f3" fill="none" />
        <path d="M6 1 V10 H15 V8 H8 V1 Z M1 10 H4 V15 H1 Z" fill="#3f87ab" />
      </g>
    ),
  },
  {
    name: "Safely remove hardware",
    art: () => (
      <g>
        <path d="M0 7 L8 2 16 7 V16 H0 Z" fill="#17a73a" />
        <path d="M7 6 L8 1 12 0 15 2 11 3 10 7 Z" fill="#3fd060" />
        <path d="M4 10 L7 13 12 8" stroke="#fff" strokeWidth="2" fill="none" />
      </g>
    ),
  },
  {
    name: "Toolbox",
    art: () => (
      <g>
        <path d="M0 4 L10 1 16 5 15 13 5 16 0 10 Z" fill="#c8040c" />
        <path d="M0 5 L5 8 16 5 M5 8 V16 M1 9 L5 12 15 9" stroke="#5e0004" fill="none" />
        <path d="M2 4 L10 2" stroke="#ff4a4a" strokeDasharray="1 1" />
      </g>
    ),
  },
  { name: "Growl", art: () => <g transform="scale(0.333)"><Paw /></g> },
  {
    name: "Fraps",
    art: () => (
      <g>
        <path d="M4 4 H15 V12 H3 Z" fill="#1a2440" stroke="#c3c6ca" />
        <path d="M5 15 H13" stroke="#8a8d90" strokeWidth="1.500" />
        <rect width="9" height="8" fill="#000" />
        <path d="M0 1 H4 V7 H0 V6 H3 V5 H0 Z M1 2 V4 H3 V2 Z M5 1 H9 V7 H5 V6 H8 V5 H5 Z M6 2 V4 H8 V2 Z" fill="#ff0" fillRule="evenodd" />
      </g>
    ),
  },
  {
    name: "Adobe updater",
    art: () => (
      <g>
        <rect x="0.500" y="1.500" width="14" height="13" fill="#c8141a" stroke="#e65054" />
        <path d="M3 12 V4 H6 Z M12 12 V4 H9 Z M7.500 7 L10 12 H8 L7 10 H6 Z" fill="#fff" />
      </g>
    ),
  },
  {
    name: "ATI Catalyst",
    art: () => (
      <g>
        <rect y="2" width="16" height="12" fill="#e00a12" />
        <path d="M1 12 L5 4 H7 L8 12 H6 V10 H4 L3 12 Z M8 4 H14 V6 H12 L11 12 H9 L10 6 H8 Z M13 7 H15 L14 12 H12 Z" fill="#fff" />
      </g>
    ),
  },
  {
    name: "Action Center",
    art: () => (
      <g>
        <path d="M2 1 V15" stroke="#fff" strokeWidth="1.500" />
        <path d="M3 3 H8 L9 5 H15 L13 8 15 9 H8 L7 8 H3 Z" fill="#fff" />
      </g>
    ),
  },
  {
    name: "Audio device",
    art: () => (
      <g>
        <path d="M0 6 H4 L9 1 V15 L4 10 H0 Z" fill="#d06a4a" stroke="#f0b09a" strokeWidth="0.500" />
        <path d="M11 5 Q13 8 11 11 M13 3 Q16 8 13 13" stroke="#5a1e0e" fill="none" />
      </g>
    ),
  },
  {
    name: "Network",
    art: () => (
      <g>
        <path d="M5 4.500 H14.500 V11.500 H5" fill="#16191c" stroke="#fff" strokeWidth="1.500" />
        <path d="M1 1 V4 H5 V1 M3 4 V13 H6 M10 12 V14 M6 14.500 H13" stroke="#fff" fill="none" />
      </g>
    ),
  },
  {
    name: "Volume",
    art: () => (
      <g>
        <path d="M1 5.500 H4 L8 2 V14 L4 10.500 H1 Z" fill="#fff" />
        <path d="M10 6 Q11.500 8 10 10 M12 4 Q14.500 8 12 12 M14 2.500 Q17 8 14 13.500" stroke="#ddd" fill="none" />
      </g>
    ),
  },
];

export default function App() {
  return (
    <Screen>
      <GlobalStyle />
      <SharedDefs />
      <IconGrid>
        {entries.map((e) => (
          <DesktopItem key={e.label}>
            <Picture art={e.art} link={e.link} />
            <Label>{e.label}</Label>
          </DesktopItem>
        ))}
      </IconGrid>
      <Notepad />
      <StatusTip role="status">Status: Bulk Friend Re...</StatusTip>
      <Taskbar>
        <StartButton aria-label="Start">
          <Picture art={StartOrb} size={38} />
        </StartButton>
        <TaskList>
          {tasks.map((t) => (
            <TaskButton key={t.name} $state={t.state ?? "idle"} $stack={t.stack} aria-label={t.name}>
              <Picture art={t.art} size={32} />
            </TaskButton>
          ))}
        </TaskList>
        <Tray>
          {trayArt.map(({ name, art: Draw }) => (
            <TrayButton key={name} aria-label={name}>
              <Glyph $size={16} viewBox="0 0 16 16" aria-hidden="true">
                <Draw />
              </Glyph>
            </TrayButton>
          ))}
        </Tray>
        <Clock>
          10:48 AM
          <br />
          9/2/2010
        </Clock>
        <ShowDesktop aria-label="Show desktop" />
      </Taskbar>
    </Screen>
  );
}
